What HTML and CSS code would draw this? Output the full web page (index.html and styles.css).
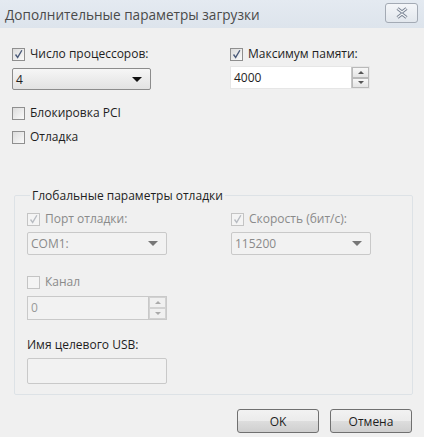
FILE: index.html
```html
<!DOCTYPE html>
<html>
<head>
<meta charset="utf-8">
<link rel="stylesheet" href="styles.css">
</head>
<body>
<div class="window">
  <div class="titlebar">
    <span class="title">Дополнительные параметры загрузки</span>
    <span class="close"><svg width="16" height="12" viewBox="0 0 16 12"><path d="M3.5 1.5 L8 5 L12.5 1.5 M3.5 10.5 L8 7 L12.5 10.5" fill="none" stroke="#7a8494" stroke-width="3.2"/><path d="M3.5 1.5 L8 5 L12.5 1.5 M3.5 10.5 L8 7 L12.5 10.5" fill="none" stroke="#f4f6f8" stroke-width="1.2"/></svg></span>
  </div>
  <div class="content">
    <div class="toprow">
      <div class="col">
        <label class="check"><span class="box on"><svg viewBox="0 0 13 13"><path d="M3 6.5 L5.5 10 L10.5 1.5" fill="none" stroke="#4b5b7a" stroke-width="1.6"/></svg></span>Число процессоров:</label>
        <div class="select sel1"><span>4</span><span class="arrow"></span></div>
      </div>
      <div class="col col2">
        <label class="check"><span class="box on"><svg viewBox="0 0 13 13"><path d="M3 6.5 L5.5 10 L10.5 1.5" fill="none" stroke="#4b5b7a" stroke-width="1.6"/></svg></span>Максимум памяти:</label>
        <div class="spin mem"><span class="val">4000</span><span class="spinbtns"><span class="up"></span><span class="down"></span></span></div>
      </div>
    </div>
    <label class="check pci"><span class="box"></span>Блокировка PCI</label>
    <label class="check dbg"><span class="box"></span>Отладка</label>

    <fieldset class="group">
      <legend>Глобальные параметры отладки</legend>
      <div class="grow">
        <div class="col">
          <label class="check dis"><span class="box on"><svg viewBox="0 0 13 13"><path d="M3 6.5 L5.5 10 L10.5 1.5" fill="none" stroke="#b8bcc2" stroke-width="1.6"/></svg></span>Порт отладки:</label>
          <div class="select dis"><span>COM1:</span><span class="arrow"></span></div>
        </div>
        <div class="col col2g">
          <label class="check dis"><span class="box on"><svg viewBox="0 0 13 13"><path d="M3 6.5 L5.5 10 L10.5 1.5" fill="none" stroke="#b8bcc2" stroke-width="1.6"/></svg></span>Скорость (бит/с):</label>
          <div class="select dis"><span>115200</span><span class="arrow"></span></div>
        </div>
      </div>
      <label class="check dis chan"><span class="box"></span>Канал</label>
      <div class="spin dis chanspin"><span class="val">0</span><span class="spinbtns"><span class="up"></span><span class="down"></span></span></div>
      <div class="usblabel">Имя целевого USB:</div>
      <div class="usbinput"></div>
    </fieldset>

    <div class="buttons">
      <button class="btn">OK</button>
      <button class="btn">Отмена</button>
    </div>
  </div>
</div>
</body>
</html>
```

FILE: styles.css
```css
* { box-sizing: border-box; }
html, body { margin: 0; padding: 0; }
body {
  width: 424px; height: 437px; overflow: hidden;
  background: #f0f0f0;
  font-family: "Open Sans", "Noto Sans", sans-serif;
  font-size: 12px;
  color: #1e1e1e;
}
.window { width: 424px; height: 437px; }
.titlebar {
  height: 28px;
  background: linear-gradient(#e4eaf1, #dde4ec);
  display: flex; align-items: center; justify-content: space-between;
  padding: 0 6px 0 5px;
}
.title { font-size: 13.6px; color: #4a4a4a; }
.close {
  width: 33px; height: 20px; margin-top: -2px;
  border: 1px solid #a3aab4; border-radius: 3px;
  background: linear-gradient(#f4f6f9, #e2e7ed);
  display: flex; align-items: center; justify-content: center;
}
.content { padding: 18px 0 0 12px; }
.toprow { display: flex; }
.col { width: 140px; display: flex; flex-direction: column; }
.col2 { margin-left: 78px; }
.check { display: flex; align-items: center; height: 16px; line-height: 16px; }
.box {
  width: 13px; height: 13px; margin-right: 5px; flex: none;
  border: 1px solid #8f8f8f;
  background: linear-gradient(135deg, #dcdcdc, #fafafa);
  display: flex;
}
.box svg { width: 11px; height: 11px; }
.select {
  margin-top: 6px; height: 22px; width: 139px;
  border: 1px solid #8c8c8c; border-radius: 2px;
  background: linear-gradient(#f6f6f6, #e2e2e2);
  display: flex; align-items: center; justify-content: space-between;
  padding: 0 8px 0 3px;
}
.arrow { width: 0; height: 0; border-left: 5px solid transparent; border-right: 5px solid transparent; border-top: 5px solid #111; }
.spin {
  margin-top: 4px; height: 23px; width: 140px;
  background: #fff; border: 1px solid #e6e6e6;
  display: flex; align-items: stretch; justify-content: space-between;
}
.spin .val { padding-left: 3px; line-height: 21px; }
.spinbtns { width: 18px; display: flex; flex-direction: column; border-left: 1px solid #c8c8c8; }
.spinbtns span { flex: 1; display: flex; align-items: center; justify-content: center; background: linear-gradient(#f7f7f7, #e4e4e4); border: 1px solid #b9b9b9; }
.spinbtns .up::after { content: ""; border-left: 3px solid transparent; border-right: 3px solid transparent; border-bottom: 3px solid #555; }
.spinbtns .down::after { content: ""; border-left: 3px solid transparent; border-right: 3px solid transparent; border-top: 3px solid #555; }
.pci { margin-top: 15px; }
.dbg { margin-top: 8px; }
.group {
  margin: 42px 0 0 2px; width: 399px; height: 208px;
  border: 1px solid #dde2e6; border-radius: 2px;
  padding: 7px 0 0 12px;
}
.group legend { padding: 0 2px; margin-left: 3px; font-size: 12px; color: #1e1e1e; }
.grow { display: flex; }
.col2g { margin-left: 64px; }
.dis { color: #8a8a8a; }
.dis .box { border-color: #c4c4c4; background: #f4f4f4; }
.select.dis { border-color: #c9c9c9; background: #f2f2f2; margin-top: 5px; height: 23px; width: 140px; }
.select.dis .arrow { border-top-color: #777; }
.chan { margin-top: 19px; }
.chanspin { margin-top: 6px; width: 140px; height: 24px; background: #f2f2f2; border: 1px solid #c9c9c9; }
.chanspin .val { color: #999; }
.chanspin .spinbtns span { background: #f0f0f0; border-color: #d2d2d2; }
.chanspin .spinbtns .up::after { border-bottom-color: #aaa; }
.chanspin .spinbtns .down::after { border-top-color: #aaa; }
.usblabel { margin-top: 17px; height: 16px; line-height: 16px; }
.usbinput { margin-top: 5px; width: 140px; height: 26px; border: 1px solid #c9c9c9; border-radius: 2px; background: #f2f2f2; }
.buttons { display: flex; justify-content: flex-end; gap: 11px; padding-right: 12px; margin-top: 14px; }
.btn {
  width: 82px; height: 24px;
  font-family: inherit; font-size: 12px; color: #1e1e1e;
  border: 1px solid #707070; border-radius: 3px;
  background: linear-gradient(#f2f2f2 0%, #ebebeb 50%, #dddddd 51%, #cfcfcf 100%);
}
```
